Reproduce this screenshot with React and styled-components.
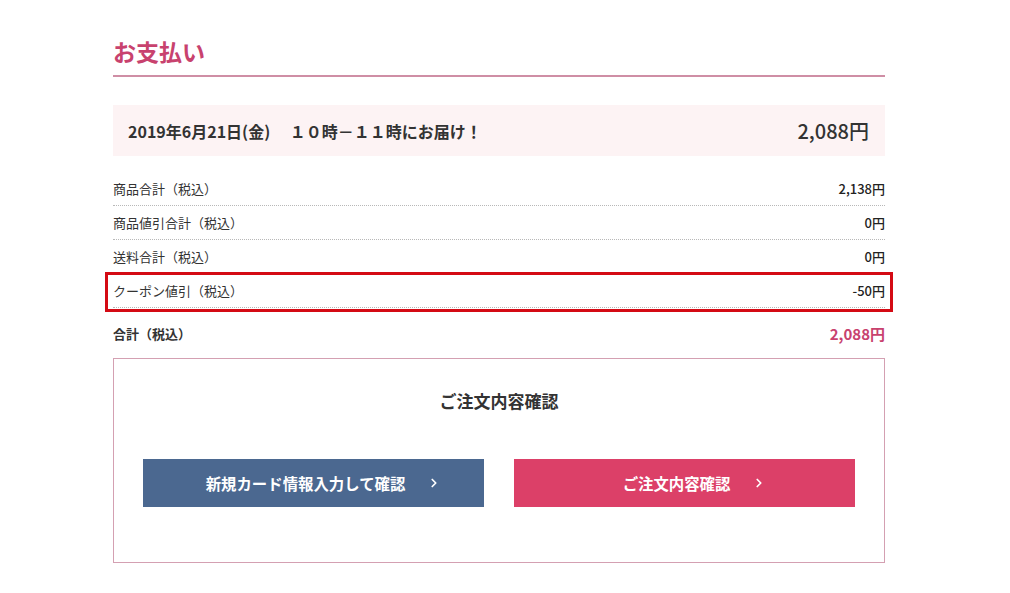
import React from 'react'
import styled, { createGlobalStyle } from 'styled-components'
import { ChevronRight } from 'lucide-react'

const GlobalStyle = createGlobalStyle`
  body {
    margin: 0;
    background: #fff;
    font-family: "Noto Sans CJK JP", "Noto Sans", sans-serif;
    color: #333;
  }
`

const Page = styled.div`
  width: 772px;
  margin-left: 113px;
  padding-top: 36px;
`

const Title = styled.h1`
  margin: 0;
  font-size: 23px;
  line-height: 30px;
  font-weight: 700;
  color: #c8426e;
  padding-bottom: 9px;
  border-bottom: 2px solid #cf8ea5;
`

const Banner = styled.div`
  margin-top: 28px;
  height: 51px;
  background: #fdf3f4;
  display: flex;
  align-items: center;
  justify-content: space-between;
  padding: 0 16px 0 15px;
`

const Delivery = styled.div`
  font-size: 16px;
  font-weight: 700;
  color: #333;
  white-space: pre;
`

const BannerPrice = styled.div`
  font-size: 20px;
  font-weight: 500;
  color: #333;
`

const Rows = styled.div`
  margin-top: 16px;
`

const Row = styled.div`
  position: relative;
  height: 33px;
  display: flex;
  align-items: center;
  justify-content: space-between;
  font-size: 13px;
  border-bottom: 1px dotted #b8b8b8;

  ${props => props.marked && `
    &::after {
      content: '';
      position: absolute;
      left: -8px;
      right: -8px;
      top: -2px;
      bottom: -5px;
      border: 3px solid #d40a14;
      pointer-events: none;
    }
  `}
`

const Value = styled.span`
  color: #222;
  font-weight: 500;
`

const TotalRow = styled.div`
  height: 50px;
  display: flex;
  align-items: center;
  justify-content: space-between;
  font-size: 13px;
  font-weight: 700;
`

const TotalValue = styled.span`
  font-size: 15px;
  color: #c8426e;
`

const ConfirmBox = styled.div`
  border: 1px solid #d4a0b2;
  height: 205px;
  box-sizing: border-box;
  padding: 32px 29px 0;
`

const BoxTitle = styled.div`
  text-align: center;
  font-size: 17px;
  line-height: 20px;
  font-weight: 700;
  color: #333;
`

const Buttons = styled.div`
  margin-top: 48px;
  display: grid;
  grid-template-columns: 1fr 1fr;
  gap: 30px;
`

const Button = styled.button`
  height: 48px;
  border: none;
  border-radius: 0;
  background: ${props => props.primary ? '#dc4068' : '#4b6890'};
  color: #fff;
  font-family: inherit;
  font-size: 15.4px;
  font-weight: 700;
  display: flex;
  align-items: center;
  justify-content: center;
  gap: 22px;
  padding: 0 0 0 20px;
  cursor: pointer;
`

const rows = [
  { label: '商品合計（税込）', value: '2,138円' },
  { label: '商品値引合計（税込）', value: '0円' },
  { label: '送料合計（税込）', value: '0円' },
  { label: 'クーポン値引（税込）', value: '-50円', marked: true },
]

export default function App() {
  return (
    <>
      <GlobalStyle />
      <Page>
        <Title>お支払い</Title>
        <Banner>
          <Delivery>2019年6月21日(金)　 １０時－１１時にお届け！</Delivery>
          <BannerPrice>2,088円</BannerPrice>
        </Banner>
        <Rows>
          {rows.map(r => (
            <Row key={r.label} marked={r.marked}>
              <span>{r.label}</span>
              <Value>{r.value}</Value>
            </Row>
          ))}
          <TotalRow>
            <span>合計（税込）</span>
            <TotalValue>2,088円</TotalValue>
          </TotalRow>
        </Rows>
        <ConfirmBox>
          <BoxTitle>ご注文内容確認</BoxTitle>
          <Buttons>
            <Button>新規カード情報入力して確認<ChevronRight size={14} strokeWidth={3} /></Button>
            <Button primary>ご注文内容確認<ChevronRight size={14} strokeWidth={3} /></Button>
          </Buttons>
        </ConfirmBox>
      </Page>
    </>
  )
}
